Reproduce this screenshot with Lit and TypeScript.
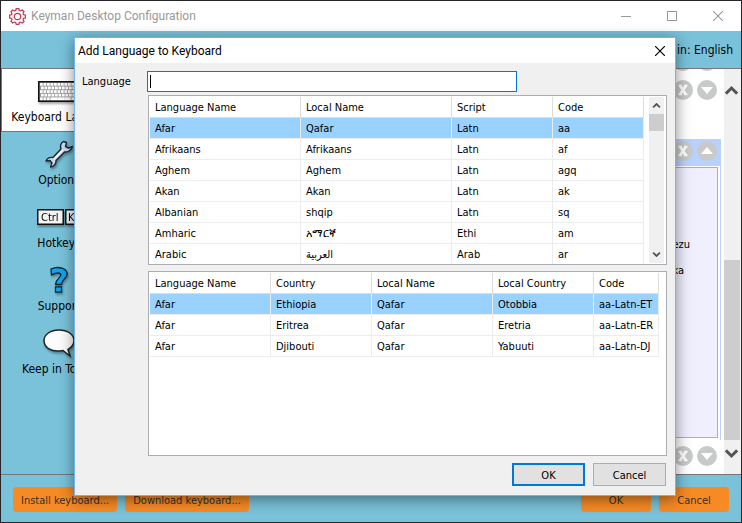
import { LitElement, html, css, svg } from "lit";
import { customElement } from "lit/decorators.js";

const gear = (() => {
  const pts: string[] = [];
  const teeth = 8;
  for (let i = 0; i < teeth; i++) {
    const base = (i / teeth) * Math.PI * 2;
    const step = Math.PI / teeth;
    for (const [a, r] of [[-0.75, 5.9], [-0.4, 7.6], [0.4, 7.6], [0.75, 5.9]]) {
      const t = base + a * step;
      pts.push(`${(8 + r * Math.cos(t)).toFixed(2)} ${(8 + r * Math.sin(t)).toFixed(2)}`);
    }
  }
  return `M${pts.join("L")}Z`;
})();

const keyboardKeys = () => {
  const keys = [];
  for (let row = 0; row < 5; row++) {
    for (let col = 0; col < 11; col++) {
      const spaceBar = row === 4 && col > 2 && col < 8;
      keys.push(svg`<rect x=${2 + col * 3.5 + (row % 2)} y=${2 + row * 3.6} width=${spaceBar ? 3.6 : 2.7} height="2.7" fill="#fff"/>`);
    }
  }
  return keys;
};

const languages = [
  ["Afar", "Qafar", "Latn", "aa"],
  ["Afrikaans", "Afrikaans", "Latn", "af"],
  ["Aghem", "Aghem", "Latn", "agq"],
  ["Akan", "Akan", "Latn", "ak"],
  ["Albanian", "shqip", "Latn", "sq"],
  ["Amharic", "አማርኛ", "Ethi", "am"],
  ["Arabic", "العربية", "Arab", "ar"],
];

const regions = [
  ["Afar", "Ethiopia", "Qafar", "Otobbia", "aa-Latn-ET"],
  ["Afar", "Eritrea", "Qafar", "Eretria", "aa-Latn-ER"],
  ["Afar", "Djibouti", "Qafar", "Yabuuti", "aa-Latn-DJ"],
];

const chevron = (dir: "up" | "down", size: number) => html`
  <svg width=${size} height=${size} viewBox="0 0 12 12" aria-hidden="true">
    <path d=${dir === "up" ? "M1.5 8.5L6 4L10.5 8.5" : "M1.5 3.5L6 8L10.5 3.5"} fill="none" stroke="#555" stroke-width="2.4"/>
  </svg>`;

@customElement("app-root")
export class AppRoot extends LitElement {
  static styles = css`
    :host {
      display: block;
      font-family: "DejaVu Sans Condensed", "Noto Sans", sans-serif;
      font-size: 11px;
      color: #000;
    }
    * { box-sizing: border-box; }
    button, input { font: inherit; color: inherit; margin: 0; }
    svg { display: block; flex: none; }
    .window {
      position: relative;
      display: flex;
      flex-direction: column;
      min-height: 100vh;
      border: 1px solid #26262b;
      background: #79c2da;
      overflow: hidden;
    }
    .titlebar {
      display: flex;
      align-items: center;
      height: 30px;
      padding-left: 8px;
      background: #fff;
      color: #999;
      font-family: Roboto, "Open Sans", sans-serif;
      font-size: 12px;
    }
    .titlebar .name { flex: 1; padding-left: 5px; }
    .plain { border: 0; padding: 0; background: none; display: grid; place-items: center; }
    .caption { width: 46px; height: 30px; }
    .toolbar {
      display: flex;
      justify-content: flex-end;
      align-items: center;
      height: 37px;
      padding-right: 8px;
      font-size: 12px;
    }
    .main { display: flex; flex: 1; border-bottom: 1px solid #777; }
    .side { width: 116px; display: flex; flex-direction: column; }
    .tab {
      display: flex;
      flex-direction: column;
      align-items: center;
      justify-content: flex-end;
      height: 63px;
      padding: 0 0 7px;
      border: 0;
      background: none;
      white-space: nowrap;
      font-size: 12px;
      line-height: 16px;
    }
    .tab.on {
      height: 64px;
      background: #fff;
      border: 1px solid #777;
      border-right: 0;
      padding-bottom: 6px;
    }
    .pic { height: 34px; margin-bottom: 1px; display: grid; place-items: center; }
    .on .pic { margin-bottom: 1px; }
    .pic svg { overflow: visible; filter: drop-shadow(1px 2px 1px #0005); }
    .content {
      flex: 1;
      display: flex;
      flex-direction: column;
      background: #fff;
      border-top: 1px solid #777;
      overflow: hidden;
      padding-right: 3px;
    }
    .bar { display: flex; justify-content: flex-end; align-items: flex-start; gap: 4px; padding-right: 4px; }
    .bar.cut { height: 2px; align-items: flex-end; }
    .bar.first { height: 68px; padding-top: 9px; }
    .bar.head { height: 27px; padding-top: 2px; background: #b9d1ff; }
    .bar.last { height: 34px; padding-top: 6px; }
    .panel { flex: 1; border-right: 1px solid #b9d1ff; padding: 1px 2px 2px 0; background: #fff; }
    .inner {
      height: 100%;
      border: 1px solid #79c2da;
      background: #f0effe;
      padding: 69px 27px 0 0;
      line-height: 16px;
      text-align: right;
    }
    .inner p { margin: 0 0 10px; }
    .inner p + p { margin-right: 6px; }
    .scroll { width: 17px; background: #f0f0f0; border-top: 1px solid #777; display: flex; flex-direction: column; }
    .scroll .plain { height: 42px; width: 15px; }
    .scroll .track { flex: 1; display: flex; flex-direction: column; justify-content: flex-end; }
    .scroll .thumb { height: 180px; width: 16px; background: #cdcdcd; }
    .scroll .plain.end { height: 34px; padding-bottom: 8px; }
    .footer { display: flex; gap: 8px; height: 47px; padding: 12px; align-items: flex-start; }
    .footer .gap { flex: 1; }
    .orange {
      height: 25px;
      padding: 2px 8px 0;
      border: 0;
      border-radius: 4px;
      background: #f68a24;
      color: #33302e;
    }
    .orange.wide { width: 70px; }
    .dialog {
      position: absolute;
      left: 73px;
      right: 65px;
      top: 36px;
      border: 1px solid #74b4ea;
      background: #f0f0f0;
      box-shadow: 0 3px 14px #0007;
    }
    .dialog header {
      display: flex;
      align-items: center;
      height: 25px;
      padding: 0 10px 0 3px;
      background: #fff;
    }
    .dialog h1 {
      flex: 1;
      margin: 0;
      font-family: Roboto, "Open Sans", sans-serif;
      font-size: 12px;
      font-weight: 400;
    }
    .body { display: grid; grid-template-columns: 65px 1fr; padding: 8px 8px 9px 7px; }
    .body label { line-height: 22px; height: 21px; }
    .entry { position: relative; width: 370px; }
    .entry::after {
      content: "";
      position: absolute;
      left: 3px;
      top: 4px;
      width: 1px;
      height: 13px;
      background: #000;
    }
    .field {
      display: block;
      width: 100%;
      height: 21px;
      padding: 0 2px;
      border: 1px solid #0078d7;
      background: #fff;
      outline: 0;
      caret-color: transparent;
    }
    .stack { grid-column: 2; display: flex; flex-direction: column; gap: 6px; padding: 3px 0 0 1px; }
    .list {
      display: flex;
      justify-content: space-between;
      height: 170px;
      padding: 1px;
      border: 1px solid #abadb3;
      background: #fff;
      overflow: hidden;
      align-items: flex-start;
    }
    .list.low { height: 185px; }
    table { border-collapse: separate; border-spacing: 0; table-layout: fixed; width: 494px; }
    .low table { width: 509px; }
    th, td {
      height: 21px;
      padding: 2px 0 0 5px;
      border-right: 1px solid #ececec;
      border-bottom: 1px solid #ececec;
      text-align: left;
      font-weight: 400;
      line-height: 18px;
      white-space: nowrap;
    }
    th { border-color: #ddd; }
    .hit td { background: #99d1ff; }
    .w151 { width: 151px; }
    .w121 { width: 121px; }
    .w101 { width: 101px; }
    .mini { width: 15px; height: 166px; margin-right: 1px; background: #f0f0f0; display: flex; flex-direction: column; }
    .mini .plain { width: 15px; height: 17px; }
    .mini .track { flex: 1; }
    .mini .thumb { height: 17px; background: #cdcdcd; }
    .actions { display: flex; justify-content: flex-end; gap: 8px; padding: 1px 1px 0 0; }
    .push { width: 73px; height: 23px; padding: 2px 0 0; border: 1px solid #adadad; background: #e1e1e1; }
    .push.main-action { border: 2px solid #0078d7; }
  `;

  private round(kind: "x" | "up" | "down") {
    const glyph =
      kind === "x"
        ? svg`<path d="M7 5.5L13 14.5M13 5.5L7 14.5" stroke="#fff" stroke-width="2.8"/><path d="M5.5 5.5H9M11 5.5H14.5M5.5 14.5H9M11 14.5H14.5" stroke="#fff" stroke-width="1.4"/>`
        : svg`<path d=${kind === "up" ? "M4 13L10 6L16 13Z" : "M4 7L10 14L16 7Z"} fill="#fff"/>`;
    return html`<button class="plain" aria-label=${kind === "x" ? "Remove" : kind === "up" ? "Collapse" : "Expand"}>
      <svg width="20" height="20" viewBox="0 0 20 20"><circle cx="10" cy="10" r="10" fill="#c8c9c9"/>${glyph}</svg>
    </button>`;
  }

  private rows(data: string[][]) {
    return data.map((r, i) => html`<tr class=${i === 0 ? "hit" : ""}>${r.map((c) => html`<td>${c}</td>`)}</tr>`);
  }

  private tab(label: string, icon: unknown, on = false) {
    return html`<button class="tab ${on ? "on" : ""}"><span class="pic">${icon}</span>${label}</button>`;
  }

  render() {
    return html`
      <div class="window">
        <div class="titlebar">
          <svg width="17" height="17" viewBox="0 0 16 16" fill="none" stroke="#c43a55" stroke-width="1.2" stroke-linejoin="round">
            <path d=${gear}/><circle cx="8" cy="8" r="3"/>
          </svg>
          <span class="name">Keyman Desktop Configuration</span>
          <button class="plain caption" aria-label="Minimize"><svg width="10" height="10"><path d="M0 5.5H10" stroke="#999"/></svg></button>
          <button class="plain caption" aria-label="Maximize"><svg width="10" height="10"><rect x=".5" y=".5" width="9" height="9" fill="none" stroke="#999"/></svg></button>
          <button class="plain caption" aria-label="Close"><svg width="10" height="10"><path d="M0 0L10 10M10 0L0 10" stroke="#999" stroke-width="1.1"/></svg></button>
        </div>
        <div class="toolbar">Display Keyman in: English</div>
        <div class="main">
          <nav class="side">
            ${this.tab("Keyboard Layouts", html`<svg width="44" height="21" viewBox="0 0 44 21">
              <rect x=".75" y=".75" width="42.5" height="19.5" fill="#999" stroke="#111" stroke-width="1.5"/>${keyboardKeys()}
            </svg>`, true)}
            ${this.tab("Options", html`<svg width="28" height="28" viewBox="0 0 28 28">
              <path d="M18.5 1.5C16 3 15 6 16 9L8 17.5C5 17 2 18.5 1 21L5 20.5L7 23L5.5 27C9 26.5 11.5 23.5 11 20.5L19.5 12C23 12.5 26.5 10 27.5 6.5L23.5 8L20.5 6.5L21.5 2.5Z" fill="#c8dcee" stroke="#1d2630" stroke-width="1.4" stroke-linejoin="round"/>
              <path d="M9 19L18 10" stroke="#fff" stroke-width="1.5"/>
            </svg>`)}
            ${this.tab("Hotkeys", html`<svg width="44" height="16" viewBox="0 0 44 16" font-size="11">
              <rect x=".75" y=".75" width="25.5" height="14.5" fill="#f4f4f4" stroke="#111" stroke-width="1.5"/>
              <rect x="28.75" y=".75" width="16" height="14.5" fill="#f4f4f4" stroke="#111" stroke-width="1.5"/>
              <text x="4" y="12">Ctrl</text><text x="31" y="12">K</text>
            </svg>`)}
            ${this.tab("Support", html`<svg width="18" height="26" viewBox="0 0 18 26">
              <path d="M1 2C5 .2 9 .2 12 1.2C16 2.5 17.5 5 17 8C16.4 11.5 11.800 12.500 11.500 17.500H5.500C5.500 12 10.500 11 10.800 8C11 5.200 6 5.500 1.500 8ZM5.500 19.800H11.500V25.200H5.500Z" fill="#12a3ee" stroke="#0c2233" stroke-width="1.3"/>
            </svg>`)}
            ${this.tab("Keep in Touch", html`<svg width="32" height="28" viewBox="0 0 32 28">
              <path d="M20 21.5C8 24 1 18 1 11.5C1 5.5 7.5 1 16 1C24.5 1 31 5.5 31 11.5C31 15.5 28.5 18.5 25 20.5L27 27Z" fill="#fcfcfc" stroke="#222" stroke-width="1.5"/>
            </svg>`)}
          </nav>
          <div class="content">
            <div class="bar cut">${this.round("x")}${this.round("down")}</div>
            <div class="bar first">${this.round("x")}${this.round("down")}</div>
            <div class="bar head">${this.round("x")}${this.round("up")}</div>
            <div class="panel"><div class="inner"><p>Venezu</p><p>ka</p></div></div>
            <div class="bar last">${this.round("x")}${this.round("down")}</div>
          </div>
          <div class="scroll">
            <button class="plain" aria-label="Scroll up">${chevron("up", 15)}</button>
            <div class="track"><div class="thumb"></div></div>
            <button class="plain end" aria-label="Scroll down">${chevron("down", 15)}</button>
          </div>
        </div>
        <div class="footer">
          <button class="orange">Install keyboard...</button>
          <button class="orange">Download keyboard...</button>
          <span class="gap"></span>
          <button class="orange wide">OK</button>
          <button class="orange wide">Cancel</button>
        </div>
        <section class="dialog" role="dialog" aria-labelledby="dlg">
          <header>
            <h1 id="dlg">Add Language to Keyboard</h1>
            <button class="plain" aria-label="Close dialog"><svg width="10" height="10"><path d="M0 0L10 10M10 0L0 10" stroke="#000" stroke-width="1.2"/></svg></button>
          </header>
          <div class="body">
            <label for="lang">Language</label>
            <div class="entry"><input class="field" id="lang" type="text" /></div>
            <div class="stack">
              <div class="list">
                <table>
                  <colgroup><col class="w151" /><col class="w151" /><col class="w101" /><col /></colgroup>
                  <thead><tr><th>Language Name</th><th>Local Name</th><th>Script</th><th>Code</th></tr></thead>
                  <tbody>${this.rows(languages)}</tbody>
                </table>
                <div class="mini">
                  <button class="plain" aria-label="Scroll list up">${chevron("up", 9)}</button>
                  <div class="track"><div class="thumb"></div></div>
                  <button class="plain" aria-label="Scroll list down">${chevron("down", 9)}</button>
                </div>
              </div>
              <div class="list low">
                <table>
                  <colgroup><col class="w121" /><col class="w101" /><col class="w121" /><col class="w101" /><col /></colgroup>
                  <thead><tr><th>Language Name</th><th>Country</th><th>Local Name</th><th>Local Country</th><th>Code</th></tr></thead>
                  <tbody>${this.rows(regions)}</tbody>
                </table>
              </div>
              <div class="actions">
                <button class="push main-action">OK</button>
                <button class="push">Cancel</button>
              </div>
            </div>
          </div>
        </section>
      </div>
    `;
  }
}
